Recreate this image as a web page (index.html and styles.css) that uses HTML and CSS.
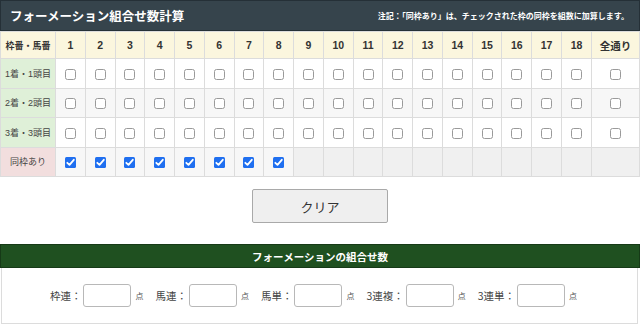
FILE: index.html
```html
<!DOCTYPE html>
<html lang="ja">
<head>
<meta charset="utf-8">
<title>フォーメーション組合せ数計算</title>
<link rel="stylesheet" href="styles.css">
</head>
<body>
<div class="page">
  <div class="titlebar">
    <h1 class="title">フォーメーション組合せ数計算</h1>
    <p class="note">注記：「同枠あり」は、チェックされた枠の同枠を組数に加算します。</p>
  </div>
  <table class="grid">
    <colgroup>
      <col class="c-label">
      <col span="18">
      <col class="c-all">
    </colgroup>
    <thead>
      <tr>
        <th class="corner">枠番・馬番</th>
        <th>1</th><th>2</th><th>3</th><th>4</th><th>5</th><th>6</th><th>7</th><th>8</th><th>9</th>
        <th>10</th><th>11</th><th>12</th><th>13</th><th>14</th><th>15</th><th>16</th><th>17</th><th>18</th>
        <th>全通り</th>
      </tr>
    </thead>
    <tbody>
      <tr class="odd">
        <td class="lbl">1着・1頭目</td>
        <td><input type="checkbox"></td><td><input type="checkbox"></td><td><input type="checkbox"></td><td><input type="checkbox"></td><td><input type="checkbox"></td><td><input type="checkbox"></td><td><input type="checkbox"></td><td><input type="checkbox"></td><td><input type="checkbox"></td>
        <td><input type="checkbox"></td><td><input type="checkbox"></td><td><input type="checkbox"></td><td><input type="checkbox"></td><td><input type="checkbox"></td><td><input type="checkbox"></td><td><input type="checkbox"></td><td><input type="checkbox"></td><td><input type="checkbox"></td>
        <td><input type="checkbox"></td>
      </tr>
      <tr class="even">
        <td class="lbl">2着・2頭目</td>
        <td><input type="checkbox"></td><td><input type="checkbox"></td><td><input type="checkbox"></td><td><input type="checkbox"></td><td><input type="checkbox"></td><td><input type="checkbox"></td><td><input type="checkbox"></td><td><input type="checkbox"></td><td><input type="checkbox"></td>
        <td><input type="checkbox"></td><td><input type="checkbox"></td><td><input type="checkbox"></td><td><input type="checkbox"></td><td><input type="checkbox"></td><td><input type="checkbox"></td><td><input type="checkbox"></td><td><input type="checkbox"></td><td><input type="checkbox"></td>
        <td><input type="checkbox"></td>
      </tr>
      <tr class="odd">
        <td class="lbl">3着・3頭目</td>
        <td><input type="checkbox"></td><td><input type="checkbox"></td><td><input type="checkbox"></td><td><input type="checkbox"></td><td><input type="checkbox"></td><td><input type="checkbox"></td><td><input type="checkbox"></td><td><input type="checkbox"></td><td><input type="checkbox"></td>
        <td><input type="checkbox"></td><td><input type="checkbox"></td><td><input type="checkbox"></td><td><input type="checkbox"></td><td><input type="checkbox"></td><td><input type="checkbox"></td><td><input type="checkbox"></td><td><input type="checkbox"></td><td><input type="checkbox"></td>
        <td><input type="checkbox"></td>
      </tr>
      <tr class="even">
        <td class="lbl same">同枠あり</td>
        <td><input type="checkbox" checked></td><td><input type="checkbox" checked></td><td><input type="checkbox" checked></td><td><input type="checkbox" checked></td><td><input type="checkbox" checked></td><td><input type="checkbox" checked></td><td><input type="checkbox" checked></td><td><input type="checkbox" checked></td>
        <td class="empty"></td><td class="empty"></td><td class="empty"></td><td class="empty"></td><td class="empty"></td><td class="empty"></td><td class="empty"></td><td class="empty"></td><td class="empty"></td><td class="empty"></td>
        <td class="empty"></td>
      </tr>
    </tbody>
  </table>
  <div class="actions">
    <button class="clear" type="button">クリア</button>
  </div>
  <div class="result">
    <h2 class="result-head">フォーメーションの組合せ数</h2>
    <div class="result-body">
      <div class="field"><span class="flabel">枠連：</span><input class="num" type="text"><span class="unit">点</span></div>
      <div class="field"><span class="flabel">馬連：</span><input class="num" type="text"><span class="unit">点</span></div>
      <div class="field"><span class="flabel">馬単：</span><input class="num" type="text"><span class="unit">点</span></div>
      <div class="field"><span class="flabel">3連複：</span><input class="num" type="text"><span class="unit">点</span></div>
      <div class="field"><span class="flabel">3連単：</span><input class="num" type="text"><span class="unit">点</span></div>
    </div>
  </div>
</div>
</body>
</html>
```
FILE: styles.css
```css
* { box-sizing: border-box; }
html, body { margin: 0; padding: 0; background: #fff; }
body {
  font-family: "Liberation Sans", "Noto Sans CJK JP", sans-serif;
  color: #333;
  width: 640px;
}
.page { width: 640px; }

.titlebar {
  height: 31px;
  background: #36444c;
  border: 1px solid #253037;
  display: flex;
  align-items: center;
  justify-content: space-between;
  padding: 0 10px 0 9px;
}
.title {
  margin: 0;
  font-size: 12.5px;
  font-weight: bold;
  color: #fff;
}
.note {
  margin: 0;
  font-size: 8px;
  font-weight: bold;
  color: #fff;
}

.grid {
  width: 640px;
  border-collapse: collapse;
  table-layout: fixed;
}
.c-label { width: 55px; }
.c-all { width: 48px; }
.grid th, .grid td {
  border: 1px solid #dcdcdc;
  text-align: center;
  vertical-align: middle;
  padding: 0;
}
.grid th {
  height: 27px;
  background: #fbf6de;
  font-size: 10.5px;
  font-weight: bold;
  color: #333;
}
.grid th.corner { font-size: 9px; }
.grid td { height: 29.5px; }
.grid tr.odd td { background: #fff; }
.grid tr.even td { background: #f7f7f7; }
.grid tr td.lbl {
  background: #dff0d8;
  font-size: 9px;
  color: #444;
}
.grid tr td.same { background: #f2dede; }
.grid tr td.empty { background: #f0f0f0; }

.grid input[type="checkbox"] {
  appearance: none;
  -webkit-appearance: none;
  width: 11px;
  height: 11px;
  margin: 0;
  display: inline-block;
  vertical-align: middle;
  border: 1px solid #9a9a9a;
  border-radius: 2.5px;
  background: #fff;
}
.grid input[type="checkbox"]:checked {
  border: none;
  border-radius: 1.5px;
  background: #1f6ff0 url("data:image/svg+xml,%3Csvg xmlns='http://www.w3.org/2000/svg' viewBox='0 0 11 11'%3E%3Cpath d='M2.3 5.8 L4.5 7.9 L8.8 2.8' fill='none' stroke='white' stroke-width='1.8' stroke-linecap='round' stroke-linejoin='round'/%3E%3C/svg%3E") center/11px 11px no-repeat;
}

.actions {
  display: flex;
  justify-content: center;
  padding: 12px 0 21px;
}
.clear {
  width: 136px;
  height: 34px;
  background: #efefef;
  border: 1px solid #a9a9a9;
  border-radius: 2px;
  font-family: "Noto Sans CJK JP", sans-serif;
  font-size: 13px;
  color: #333;
  cursor: pointer;
}

.result { width: 640px; }
.result-head {
  margin: 0;
  height: 24px;
  background: #1f5020;
  border: 1px solid #163a17;
  color: #fff;
  font-size: 10.5px;
  font-weight: bold;
  display: flex;
  align-items: center;
  justify-content: center;
}
.result-body {
  height: 56px;
  border: 1px solid #dcdcdc;
  border-top: none;
  margin: 0 2px 0 1px;
  display: flex;
  align-items: center;
  justify-content: center;
  gap: 12px;
  padding-right: 12px;
}
.field {
  display: flex;
  align-items: center;
}
.flabel {
  font-family: "Noto Sans CJK JP", sans-serif;
  font-size: 10.5px;
  color: #444;
  margin-right: 2px;
}
.num {
  width: 48px;
  height: 23px;
  border: 1px solid #b8b8b8;
  border-radius: 3px;
  background: #fff;
  margin: 0;
  padding: 0 4px;
}
.unit {
  font-family: "Noto Sans CJK JP", sans-serif;
  font-size: 8px;
  color: #555;
  margin-left: 4px;
}
```
